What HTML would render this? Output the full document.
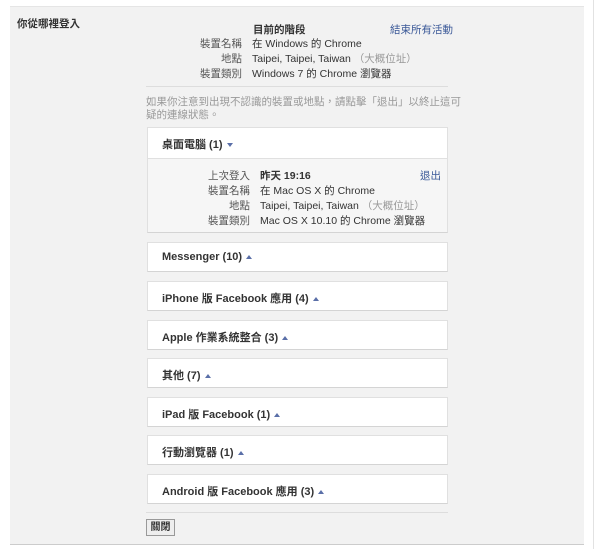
<!DOCTYPE html>
<html><head><meta charset="utf-8"><style>
body{margin:0;width:600px;height:549px;background:#fff;font-family:"Liberation Sans","Noto Sans CJK TC",sans-serif;font-size:10.5px;color:#333;position:relative;overflow:hidden}
.panel{position:absolute;left:10px;top:6px;width:574px;height:537px;background:#f2f2f2;border-top:1px solid #e5e5e5;border-bottom:1px solid #ccc}
.vline{position:absolute;left:593px;top:0;width:1px;height:549px;background:#e2e2e2}
.a{position:absolute;white-space:nowrap}
.lbl{text-align:right;width:80px;color:#555}
.card{position:absolute;left:147px;width:301px;background:#fff;border:1px solid #e0e0e0;border-bottom-color:#d4d4d4;box-sizing:border-box;height:30px}
.card .t{position:absolute;left:14px;top:8px;font-weight:bold;font-size:11px;color:#333}
.tri{display:inline-block;width:0;height:0;border-left:3px solid transparent;border-right:3px solid transparent;border-bottom:4px solid #5a6fa8;margin-left:4px;vertical-align:1px}
.down{border-bottom:none;border-top:4px solid #5a6fa8}
.link{color:#3b5998}
.g{color:#999}
</style></head><body>
<div class="panel"></div><div class="vline"></div>
<div class="a" style="left:17px;top:16px;font-weight:bold;color:#333">你從哪裡登入</div>
<div class="a" style="left:253px;top:22px;font-weight:bold">目前的階段</div>
<div class="a link" style="left:390px;top:22px">結束所有活動</div>
<div class="a lbl" style="left:162px;top:36px">裝置名稱</div><div class="a" style="left:252px;top:36px">在 Windows 的 Chrome</div>
<div class="a lbl" style="left:162px;top:51px">地點</div><div class="a" style="left:252px;top:51px">Taipei, Taipei, Taiwan <span class="g">（大概位址）</span></div>
<div class="a lbl" style="left:162px;top:66px">裝置類別</div><div class="a" style="left:252px;top:66px">Windows 7 的 Chrome 瀏覽器</div>
<div class="a" style="left:146px;top:86px;width:302px;height:1px;background:#ddd"></div>
<div class="a g" style="left:146px;top:96px;line-height:13px">如果你注意到出現不認識的裝置或地點，請點擊「退出」以終止這可<br>疑的連線狀態。</div>
<div class="card" style="top:127px;height:106px;background:#f6f6f6">
<div style="position:absolute;left:0;top:0;right:0;height:30px;background:#fff;border-bottom:1px solid #e0e0e0"></div>
<div class="t">桌面電腦 (1)<span class="tri down"></span></div>
<div class="a lbl" style="left:22px;top:40px">上次登入</div><div class="a" style="left:112px;top:40px;font-weight:bold">昨天 19:16</div>
<div class="a link" style="left:272px;top:40px">退出</div>
<div class="a lbl" style="left:22px;top:55px">裝置名稱</div><div class="a" style="left:112px;top:55px">在 Mac OS X 的 Chrome</div>
<div class="a lbl" style="left:22px;top:70px">地點</div><div class="a" style="left:112px;top:70px">Taipei, Taipei, Taiwan <span class="g">（大概位址）</span></div>
<div class="a lbl" style="left:22px;top:85px">裝置類別</div><div class="a" style="left:112px;top:85px">Mac OS X 10.10 的 Chrome 瀏覽器</div>
</div>
<div class="card" style="top:242px"><div class="t">Messenger (10)<span class="tri"></span></div></div>
<div class="card" style="top:281px"><div class="t">iPhone 版 Facebook 應用 (4)<span class="tri"></span></div></div>
<div class="card" style="top:320px"><div class="t">Apple 作業系統整合 (3)<span class="tri"></span></div></div>
<div class="card" style="top:358px"><div class="t">其他 (7)<span class="tri"></span></div></div>
<div class="card" style="top:397px"><div class="t">iPad 版 Facebook (1)<span class="tri"></span></div></div>
<div class="card" style="top:435px"><div class="t">行動瀏覽器 (1)<span class="tri"></span></div></div>
<div class="card" style="top:474px"><div class="t">Android 版 Facebook 應用 (3)<span class="tri"></span></div></div>
<div class="a" style="left:146px;top:512px;width:302px;height:1px;background:#ddd"></div>
<div class="a" style="left:146px;top:519px;width:29px;height:17px;box-sizing:border-box;border:1px solid #999;background:#eee;font-weight:bold;font-size:10px;text-align:center;line-height:15px">關閉</div>
</body></html>
